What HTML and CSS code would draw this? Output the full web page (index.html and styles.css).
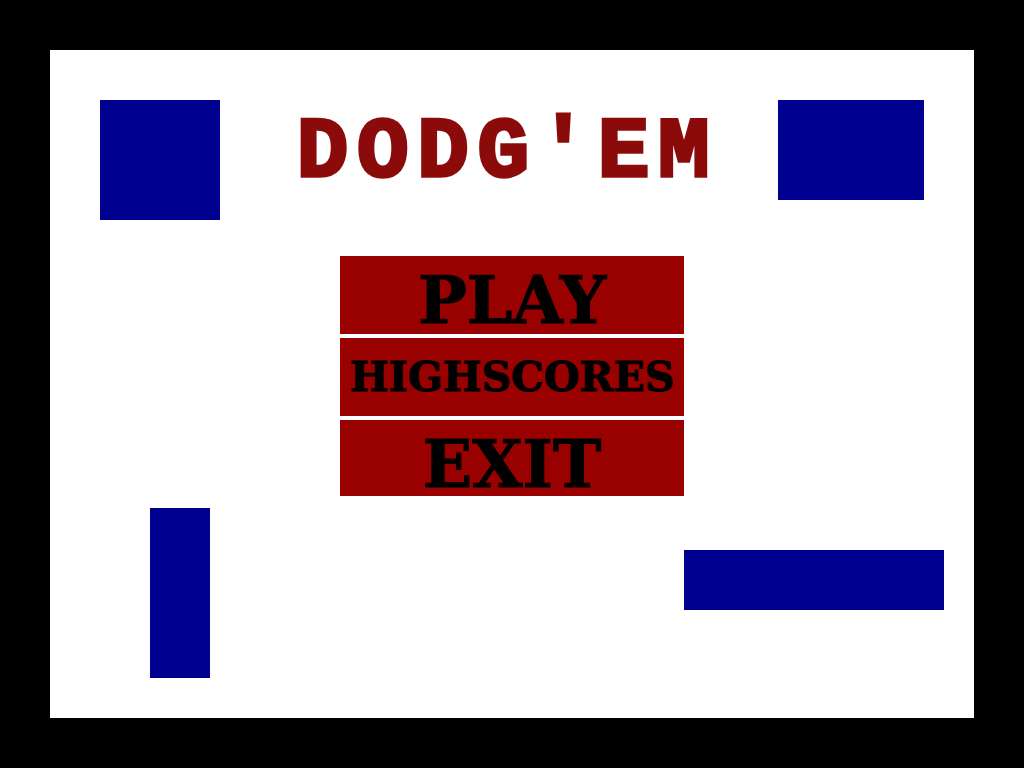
FILE: index.html
```html
<!DOCTYPE html>
<html>
<head>
<meta charset="utf-8">
<title>DODG ' EM</title>
<link rel="stylesheet" href="styles.css">
</head>
<body>
<div class="screen">
  <div class="block b1"></div>
  <div class="block b2"></div>
  <div class="block b3"></div>
  <div class="block b4"></div>
  <h1 class="title">DODG<span class="sp"> </span>'<span class="sp"> </span>EM</h1>
  <div class="menu">
    <div class="btn big">PLAY</div>
    <div class="btn small">HIGHSCORES</div>
    <div class="btn big">EXIT</div>
  </div>
</div>
</body>
</html>
```

FILE: styles.css
```css
html, body {
  margin: 0;
  background: #000;
}
body {
  padding: 50px;
  width: 924px;
  height: 668px;
}
.screen {
  position: relative;
  width: 924px;
  height: 668px;
  background: #fff;
  display: flex;
  flex-direction: column;
  align-items: center;
}
.block {
  position: absolute;
  background: #000090;
}
.b1 { left: 50px; top: 50px; width: 120px; height: 120px; }
.b2 { left: 728px; top: 50px; width: 146px; height: 100px; }
.b3 { left: 100px; top: 458px; width: 60px; height: 170px; }
.b4 { left: 634px; top: 500px; width: 260px; height: 60px; }
.title {
  margin: 58px 0 0 -9px;
  font-family: "Liberation Mono", "Courier New", monospace;
  font-weight: bold;
  font-size: 86px;
  line-height: 90px;
  letter-spacing: 8.6px;
  color: #8b0a0a;
  -webkit-text-stroke: 3.5px #8b0a0a;
}
.sp {
  font-size: 0;
  letter-spacing: 0;
}
.menu {
  margin-top: 35px;
  display: flex;
  flex-direction: column;
  gap: 4px;
  width: 344px;
}
.btn {
  height: 78px;
  background: #990000;
  color: #000;
  font-family: "DejaVu Serif", serif;
  font-weight: bold;
  text-align: center;
  box-sizing: border-box;
  -webkit-text-stroke: 1px #000;
}
.big {
  font-size: 65px;
  line-height: 78px;
  padding-top: 5px;
}
.small {
  font-size: 41px;
  line-height: 78px;
  padding-top: 0;
}
.menu .btn:last-child { height: 76px; }
```
